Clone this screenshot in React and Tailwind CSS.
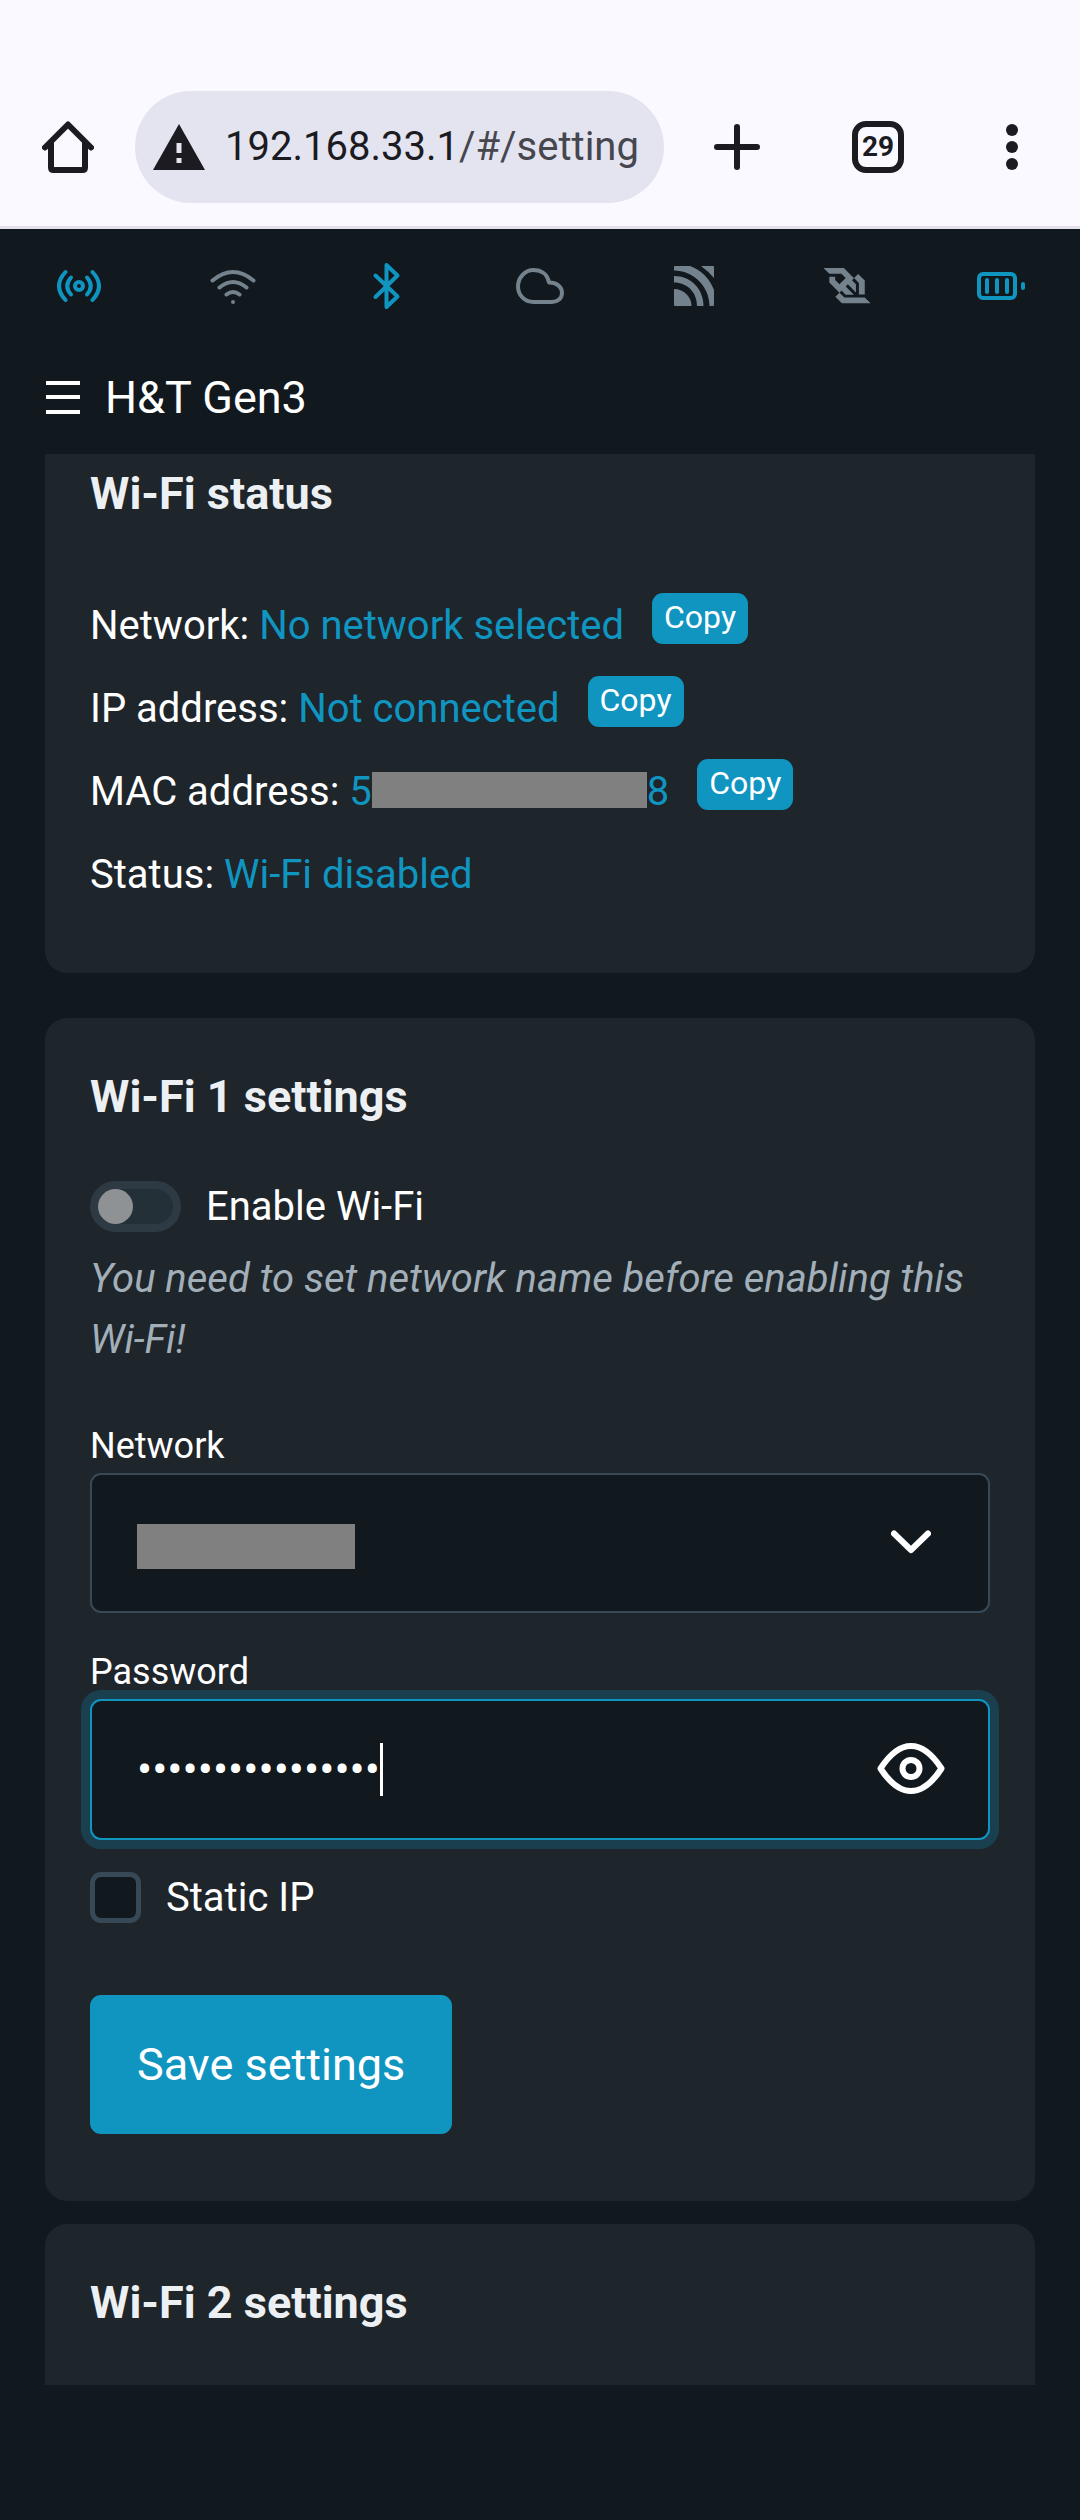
import React, { useState } from "react";

function HomeIcon() {
  return (
    <svg width="52" height="52" viewBox="0 0 52 52" fill="none" stroke="currentColor" strokeWidth="6" strokeLinejoin="round" aria-hidden="true">
      <path d="M3 26.500 26 3.500l23 23" strokeLinecap="round" />
      <path d="M9 21v25.500q0 2.500 2.500 2.500h29q2.500 0 2.500-2.500V21" />
    </svg>
  );
}

function WarningIcon() {
  return (
    <svg width="52" height="46" viewBox="0 0 52 46" className="shrink-0" aria-hidden="true">
      <path d="M26 0 52 46H0z" fill="#1b1b21" />
      <path d="M23.500 19h5v10h-5zM23.500 34h5v5h-5z" fill="#e4e4f0" />
    </svg>
  );
}

function PlusIcon() {
  return (
    <svg width="46" height="46" viewBox="0 0 46 46" stroke="currentColor" strokeWidth="6" strokeLinecap="round" aria-hidden="true">
      <path d="M3 23h40M23 3v40" />
    </svg>
  );
}

function DotsIcon() {
  return (
    <svg width="12" height="46" viewBox="0 0 12 46" fill="currentColor" aria-hidden="true">
      <circle cx="6" cy="6" r="6" />
      <circle cx="6" cy="23" r="6" />
      <circle cx="6" cy="40" r="6" />
    </svg>
  );
}

function StatusSvg({ label, className, children }) {
  return (
    <svg
      width="48"
      height="48"
      viewBox="0 0 48 48"
      fill="none"
      stroke="currentColor"
      strokeWidth="4"
      strokeLinecap="round"
      strokeLinejoin="round"
      role="img"
      aria-label={label}
      className={className}
    >
      {children}
    </svg>
  );
}

function StatusBar() {
  return (
    <div className="grid grid-cols-7 justify-items-center px-0.5 pt-[33px]">
      <StatusSvg label="Access point" className="text-[#1095c1]">
        <circle cx="24" cy="24" r="4" />
        <path d="M16 15.500q-7.500 8.500 0 17M32 15.500q7.500 8.500 0 17" />
        <path d="M10.500 10q-13 14 0 28M37.500 10q13 14 0 28" />
      </StatusSvg>
      <StatusSvg label="Wi-Fi" className="text-[#73828c]">
        <path d="M3.500 18.500q20.500-17 41 0M10.500 25.500q13.500-11 27 0M17.500 32.500q6.500-5 13 0" />
        <circle cx="24" cy="40" r="2" fill="currentColor" stroke="none" />
      </StatusSvg>
      <StatusSvg label="Bluetooth" className="text-[#1095c1]">
        <path d="M13.500 13.500 35.500 34.500 24.500 45V3l11 10.500L13.500 35" />
      </StatusSvg>
      <StatusSvg label="Cloud" className="text-[#73828c]">
        <path d="M17.500 40C8.500 40 2 33 2 24.500S8.500 8 17.500 8C25 8 31.500 12 33 20.500c7.500 0 13 4 13 10.500 0 5.500-4.500 9-10 9z" />
      </StatusSvg>
      <StatusSvg label="MQTT" className="text-[#73828c]">
        <g fill="currentColor" stroke="none">
          <path d="M4 27c10 0 17.500 8 17.500 17H5q-1 0-1-1z" />
          <path d="M4 14c17 0 29.500 13 29.500 30h-6.500C27 30 17 20.500 4 20.500z" />
          <path d="M4 5q0-1 1-1h15C31 8 39.500 16 44 28v15q0 1-1 1h-3.500C39.500 24 23 8.500 4 8.500z" />
          <path d="M31 4h12q1 0 1 1v11Q38 9 31 4z" />
        </g>
      </StatusSvg>
      <StatusSvg label="WebSocket" className="text-[#73828c]">
        <g transform="translate(0.500 6) scale(0.184)" fill="currentColor" stroke="none">
          <path d="M192.440 144.645h31.780V68.339l-35.805-35.804-22.472 22.472 26.497 26.497v63.140zm31.864 15.931H113.452L86.954 134.080l11.237-11.236 21.885 21.885h45.028l-44.357-44.441 11.320-11.320 44.357 44.356V88.296l-21.801-21.801 11.152-11.153L110.685 0H0l31.696 31.696v.084h65.740l23.227 23.227-33.960 33.960L63.476 65.740V47.712h-31.780v31.193l55.007 55.007L64.314 156.300l35.805 35.805H256l-31.696-31.529z" />
        </g>
      </StatusSvg>
      <StatusSvg label="Battery" className="text-[#1095c1]">
        <rect x="2" y="12" width="36" height="24" rx="4" />
        <path d="M10 18v12M20 18v12M30 18v12M46 22v4" />
      </StatusSvg>
    </div>
  );
}

function BrowserBar() {
  return (
    <header className="flex items-center border-b-[3px] border-[#e4e1ec] bg-[#faf9ff] pt-[91px] pr-[62px] pb-[23px] pl-[42px] text-[#1b1b21]">
      <button type="button" aria-label="Home" className="shrink-0">
        <HomeIcon />
      </button>
      <a href="#/settings" className="ml-[41px] flex h-28 min-w-0 flex-1 items-center rounded-full bg-[#e4e4f0] pr-[21px] pl-[18px]">
        <WarningIcon />
        <span className="ml-5 flex-1 overflow-hidden text-[40px] leading-[60px] whitespace-nowrap">
          192.168.33.1<span className="text-[#46464f]">/#/setting</span>
        </span>
      </a>
      <button type="button" aria-label="New tab" className="ml-[50px] shrink-0">
        <PlusIcon />
      </button>
      <button type="button" aria-label="29 open tabs" className="ml-[92px] flex size-[52px] shrink-0 items-center justify-center rounded-[14px] border-6 border-current text-[28px] leading-none font-bold">
        29
      </button>
      <button type="button" aria-label="More options" className="ml-[102px] shrink-0">
        <DotsIcon />
      </button>
    </header>
  );
}

function StatusRow({ label, copy, children }) {
  return (
    <li className="flex h-[83px] items-start gap-7 text-[40px]">
      <p className="leading-[83px] text-white">
        {label}: <span className="text-[#1095c1]">{children}</span>
      </p>
      {copy && (
        <button type="button" aria-label={"Copy " + label} className="mt-[9px] h-[51px] rounded-[11px] bg-[#1095c1] px-3 pb-1 text-[32px] leading-none text-white">
          Copy
        </button>
      )}
    </li>
  );
}

function CardTitle({ children }) {
  return <h2 className="text-[45px] leading-[68px] font-bold text-[#edf0f3]">{children}</h2>;
}

function WifiForm() {
  const [visible, setVisible] = useState(false);
  const [staticIp, setStaticIp] = useState(false);
  return (
    <form onSubmit={(e) => e.preventDefault()}>
      <label className="mt-[45px] flex h-[61px] items-center gap-[25px] text-[40px] text-white">
        <input
          type="checkbox"
          role="switch"
          disabled
          className="h-[51px] w-[91px] appearance-none rounded-full border-8 border-[#2d3a44] bg-[#243038] before:block before:size-[35px] before:rounded-full before:bg-[#8f9294]"
        />
        Enable Wi-Fi
      </label>
      <p className="mt-[11px] text-[40px] leading-[61px] text-[#a2afb9] italic">
        You need to set network name before enabling this Wi-Fi!
      </p>

      <label htmlFor="network" className="mt-[49px] block text-[36px] leading-[54px] text-white">
        Network
      </label>
      <div className="relative">
        <select id="network" className="block h-[140px] w-full appearance-none rounded-[11px] border-2 border-[#374956] bg-[#11191f] px-[45px] text-[45px] text-white">
          <option value="" aria-label="Saved network" />
        </select>
        <span className="pointer-events-none absolute top-[51px] left-[47px] h-[45px] w-[218px] bg-[#808080]" />
        <svg width="40" height="24" viewBox="0 0 40 24" fill="none" stroke="white" strokeWidth="6" strokeLinecap="round" strokeLinejoin="round" className="pointer-events-none absolute top-[57px] right-[59px]" aria-hidden="true">
          <path d="M3 3.500 20 20 37 3.500" />
        </svg>
      </div>

      <label htmlFor="password" className="mt-8 block text-[36px] leading-[54px] text-white">
        Password
      </label>
      <div className="flex h-[141px] items-center rounded-[11px] border-2 border-[#1095c1] bg-[#11191f] pr-[43px] pl-[45px] ring-9 ring-[#1a404f]">
        <input
          id="password"
          type={visible ? "text" : "password"}
          defaultValue="abcdefghijklmnop"
          className="max-w-full [field-sizing:content] bg-transparent text-[45px] leading-[53px] text-white outline-none"
        />
        <span className="h-[53px] w-[3px] shrink-0 bg-white" />
        <button type="button" aria-label="Show password" onClick={() => setVisible(!visible)} className="mb-0.5 ml-auto shrink-0">
          <svg width="68" height="51" viewBox="0 0 68 51" fill="none" stroke="white" strokeWidth="6" strokeLinejoin="round" aria-hidden="true">
            <path d="M3.500 25.500C11 14 21 3 34 3s23 11 30.500 22.500C57 37 47 48 34 48S11 37 3.500 25.500z" />
            <circle cx="34" cy="25.500" r="8.500" />
          </svg>
        </button>
      </div>

      <label className="mt-[27px] flex h-[61px] items-center gap-[25px] text-[40px] text-white">
        <input
          type="checkbox"
          checked={staticIp}
          onChange={(e) => setStaticIp(e.target.checked)}
          className="size-[51px] appearance-none rounded-[11px] border-5 border-[#374956] bg-[#11191f] checked:bg-[#1095c1]"
        />
        Static IP
      </label>

      <button type="submit" className="mt-[67px] block h-[139px] rounded-[11px] bg-[#1095c1] px-[47px] text-[45px] text-white">
        Save settings
      </button>
    </form>
  );
}

export default function App() {
  return (
    <div className="flex min-h-screen flex-col bg-[#11191f] font-['Roboto',sans-serif]">
      <BrowserBar />
      <StatusBar />
      <div className="mt-[54px] mb-[22px] flex items-center gap-6 px-[45px] text-white">
        <button type="button" aria-label="Menu" className="flex w-9 shrink-0 flex-col items-center">
          <svg width="34" height="34" viewBox="0 0 34 34" fill="currentColor" aria-hidden="true">
            <path d="M0 0h34v4H0zM0 14h34v4H0zM0 29h34v4H0z" />
          </svg>
        </button>
        <h1 className="text-[45px] leading-[68px]">H&amp;T Gen3</h1>
      </div>

      <main className="px-[45px]">
        <section className="rounded-b-[22px] bg-[#1e252b] px-[45px] pt-1.5 pb-[57px]">
          <CardTitle>Wi-Fi status</CardTitle>
          <ul className="mt-14">
            <StatusRow label="Network" copy>No network selected</StatusRow>
            <StatusRow label="IP address" copy>Not connected</StatusRow>
            <StatusRow label="MAC address" copy>
              5<span className="inline-block h-9 w-[275px] bg-[#808080] align-[-3px]" />8
            </StatusRow>
            <StatusRow label="Status">Wi-Fi disabled</StatusRow>
          </ul>
        </section>

        <section className="mt-[45px] rounded-[22px] bg-[#1e252b] px-[45px] pt-[45px] pb-[67px]">
          <CardTitle>Wi-Fi 1 settings</CardTitle>
          <WifiForm />
        </section>

        <section className="mt-[23px] rounded-t-[22px] bg-[#1e252b] px-[45px] pt-[45px] pb-12">
          <CardTitle>Wi-Fi 2 settings</CardTitle>
        </section>
      </main>
    </div>
  );
}
